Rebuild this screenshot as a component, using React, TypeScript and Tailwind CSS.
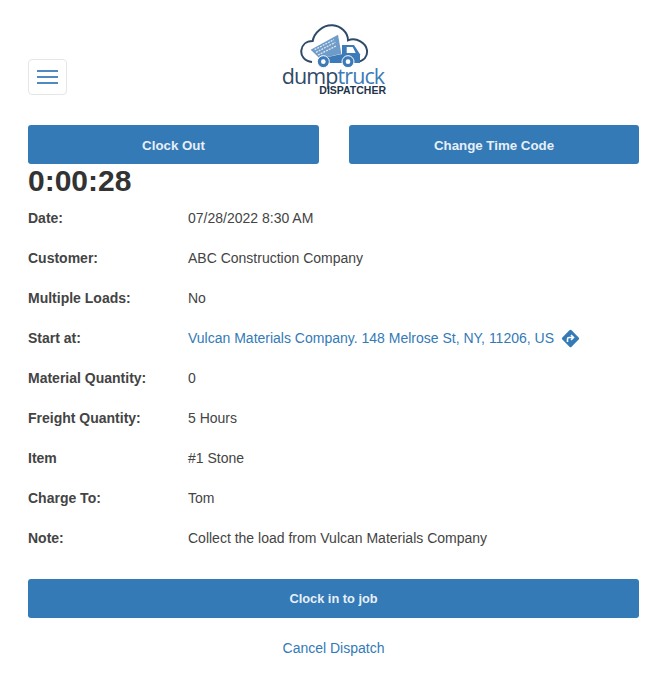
const rows: [string, string][] = [
  ["Date:", "07/28/2022 8:30 AM"],
  ["Customer:", "ABC Construction Company"],
  ["Multiple Loads:", "No"],
  ["Start at:", ""],
  ["Material Quantity:", "0"],
  ["Freight Quantity:", "5 Hours"],
  ["Item", "#1 Stone"],
  ["Charge To:", "Tom"],
  ["Note:", "Collect the load from Vulcan Materials Company"],
];

function Logo() {
  return (
    <div className="flex w-[104px] flex-col items-center">
      <svg width="69" height="48" viewBox="92 20 207 144" fill="none">
        <path d="M128 137C105 135 94 118 96 102C98 86 110 74 130 74C134 50 160 25 190 27C214 29 236 48 236 72C262 62 290 80 293 102C295 120 284 134 262 137" stroke="#2f4a68" strokeWidth="6" />
        <path d="M124 100L206 55L216 112L152 127Z" fill="#6f9bc9" />
        <path d="M136 100L194 70M140 108L198 78M146 116L202 88" stroke="#dbe6f2" strokeWidth="4" strokeDasharray="6 3" />
        <path d="M148 128L214 114H272V140H148Z" fill="#3d7ab8" />
        <path d="M218 118V86H254L272 114V132H218Z" fill="#3d7ab8" />
        <path d="M232 92H250L259 110H232Z" fill="#fff" />
        <circle cx="162" cy="136" r="18" fill="#3d7ab8" stroke="#fff" strokeWidth="3" />
        <circle cx="162" cy="136" r="7" fill="#fff" />
        <circle cx="236" cy="136" r="18" fill="#3d7ab8" stroke="#fff" strokeWidth="3" />
        <circle cx="236" cy="136" r="7" fill="#fff" />
      </svg>
      <div className="-mt-[3px] -ml-0.5 flex h-4 items-center font-['Open_Sans',sans-serif] text-[21.5px] leading-4 tracking-[-0.9px]">
        <span className="text-[#2f4a68]">dump</span>
        <span className="text-[#3d7ab8]">truck</span>
      </div>
      <div className="mt-0.5 self-end text-[10.5px] leading-[9px] font-bold text-[#22344a]">DISPATCHER</div>
    </div>
  );
}

export default function App() {
  return (
    <div className="min-h-[682px] bg-white px-7 font-['Liberation_Sans',Arial,sans-serif] text-sm text-[#444]">
      <div className="relative flex h-[125px] items-end pb-[30px]">
        <button className="flex h-9 w-[39px] flex-col items-center justify-center gap-1 rounded border border-[#e6e6e6]">
          <span className="h-0.5 w-[21px] bg-[#4f8ac0]" />
          <span className="h-0.5 w-[21px] bg-[#4f8ac0]" />
          <span className="h-0.5 w-[21px] bg-[#4f8ac0]" />
        </button>
        <div className="absolute top-[23px] left-[254px]">
          <Logo />
        </div>
      </div>
      <div className="flex w-[611px] justify-between">
        <button className="h-[39px] w-[291px] rounded-[3px] bg-[#337ab7] pt-[3px] text-[13.3px] font-bold text-[#e8eff6]">Clock Out</button>
        <button className="h-[39px] w-[290px] rounded-[3px] bg-[#337ab7] pt-[3px] text-[13.3px] font-bold text-[#e8eff6]">Change Time Code</button>
      </div>
      <div className="h-[34px] text-[30px] leading-[34px] font-bold text-[#333]">0:00:28</div>
      <div className="flex flex-col">
        {rows.map(([label, value]) => (
          <div key={label} className="flex h-10 items-center">
            <div className="w-40 font-bold">{label}</div>
            {label === "Start at:" ? (
              <div className="flex items-center gap-1.5 text-[#337ab7]">
                Vulcan Materials Company. 148 Melrose St, NY, 11206, US
                <svg width="21" height="21" viewBox="0 0 21 21">
                  <rect x="4" y="4" width="13" height="13" rx="1.5" transform="rotate(45 10.5 10.5)" fill="#337ab7" />
                  <path d="M7.5 14V11C7.5 10 8 9.5 9 9.5H13M11 7L13.5 9.5L11 12" fill="none" stroke="#fff" strokeWidth="1.6" />
                </svg>
              </div>
            ) : (
              <div>{value}</div>
            )}
          </div>
        ))}
      </div>
      <button className="mt-[21px] h-[39px] w-[611px] rounded-[3px] bg-[#337ab7] pt-0.5 text-[12.8px] font-bold text-[#e8eff6]">Clock in to job</button>
      <div className="mt-5 w-[611px] text-center text-[#337ab7]">Cancel Dispatch</div>
    </div>
  );
}
